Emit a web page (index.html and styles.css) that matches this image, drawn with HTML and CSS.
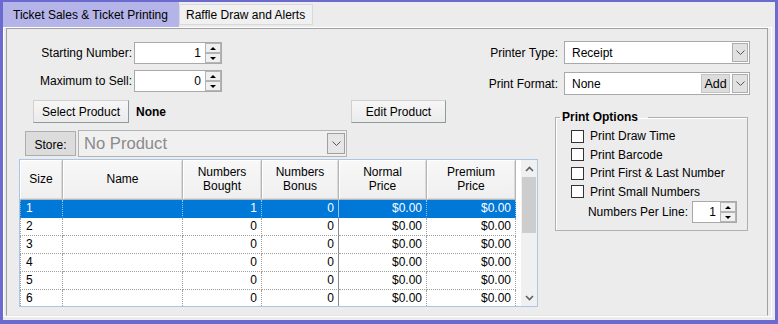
FILE: index.html
```html
<!DOCTYPE html>
<html lang="en">
<head>
  <meta charset="UTF-8" />
  <title>Ticket Sales</title>
  <link rel="stylesheet" href="styles.css">
</head>
<body>
  <div class="window">
    <div class="tabs">
      <div class="tab active">Ticket Sales &amp; Ticket Printing</div>
      <div class="tab">Raffle Draw and Alerts</div>
    </div>

    <div class="tabpanel">
      <div class="panel">

        <div class="top">
          <div class="form left-form">
            <div class="field">
              <label>Starting Number:</label>
              <div class="spin num-spin">
                <span class="val">1</span>
                <div class="spin-btns"><span class="up"></span><span class="down"></span></div>
              </div>
            </div>
            <div class="field">
              <label>Maximum to Sell:</label>
              <div class="spin num-spin">
                <span class="val">0</span>
                <div class="spin-btns"><span class="up"></span><span class="down"></span></div>
              </div>
            </div>
          </div>

          <div class="form right-form">
            <div class="field">
              <label>Printer Type:</label>
              <div class="combo">
                <span class="val">Receipt</span>
                <span class="drop"><svg width="9" height="5" viewBox="0 0 9 5"><path d="M0.5 0.5 L4.5 4.5 L8.5 0.5" fill="none" stroke="#555"/></svg></span>
              </div>
            </div>
            <div class="field">
              <label>Print Format:</label>
              <div class="combo">
                <span class="val">None</span>
                <span class="add">Add</span>
                <span class="drop"><svg width="9" height="5" viewBox="0 0 9 5"><path d="M0.5 0.5 L4.5 4.5 L8.5 0.5" fill="none" stroke="#555"/></svg></span>
              </div>
            </div>
          </div>
        </div>

        <div class="bottom">
          <div class="left">
            <div class="product-row">
              <button class="btn select-btn">Select Product</button>
              <span class="product-name">None</span>
              <button class="btn edit-btn">Edit Product</button>
            </div>

            <div class="store-row">
              <button class="store-btn">Store:</button>
              <div class="store-combo">
                <span class="val">No Product</span>
                <span class="drop"><svg width="9" height="5" viewBox="0 0 9 5"><path d="M0.5 0.5 L4.5 4.5 L8.5 0.5" fill="none" stroke="#555"/></svg></span>
              </div>
            </div>

            <div class="grid">
              <div class="grid-main">
                <div class="grid-head">
                  <div class="hcell">Size</div>
                  <div class="hcell">Name</div>
                  <div class="hcell">Numbers<br>Bought</div>
                  <div class="hcell">Numbers<br>Bonus</div>
                  <div class="hcell">Normal<br>Price</div>
                  <div class="hcell">Premium<br>Price</div>
                </div>
                <div class="grid-body">
                  <div class="grow selected">
                    <div class="cell">1</div><div class="cell"></div><div class="cell r">1</div><div class="cell r split">0</div><div class="cell r">$0.00</div><div class="cell r">$0.00</div>
                  </div>
                  <div class="grow">
                    <div class="cell">2</div><div class="cell"></div><div class="cell r">0</div><div class="cell r split">0</div><div class="cell r">$0.00</div><div class="cell r">$0.00</div>
                  </div>
                  <div class="grow">
                    <div class="cell">3</div><div class="cell"></div><div class="cell r">0</div><div class="cell r split">0</div><div class="cell r">$0.00</div><div class="cell r">$0.00</div>
                  </div>
                  <div class="grow">
                    <div class="cell">4</div><div class="cell"></div><div class="cell r">0</div><div class="cell r split">0</div><div class="cell r">$0.00</div><div class="cell r">$0.00</div>
                  </div>
                  <div class="grow">
                    <div class="cell">5</div><div class="cell"></div><div class="cell r">0</div><div class="cell r split">0</div><div class="cell r">$0.00</div><div class="cell r">$0.00</div>
                  </div>
                  <div class="grow">
                    <div class="cell">6</div><div class="cell"></div><div class="cell r">0</div><div class="cell r split">0</div><div class="cell r">$0.00</div><div class="cell r">$0.00</div>
                  </div>
                </div>
              </div>
              <div class="grid-gap"></div>
              <div class="scrollbar">
                <div class="sb-arrow"><svg width="9" height="6" viewBox="0 0 9 6"><path d="M1 5 L4.5 1.5 L8 5" fill="none" stroke="#606060" stroke-width="1.6"/></svg></div>
                <div class="sb-track"><div class="sb-thumb"></div></div>
                <div class="sb-arrow"><svg width="9" height="6" viewBox="0 0 9 6"><path d="M1 1 L4.5 4.5 L8 1" fill="none" stroke="#606060" stroke-width="1.6"/></svg></div>
              </div>
            </div>
          </div>

          <fieldset class="options">
            <legend>Print Options</legend>
            <div class="check"><span class="box"></span>Print Draw Time</div>
            <div class="check"><span class="box"></span>Print Barcode</div>
            <div class="check"><span class="box"></span>Print First &amp; Last Number</div>
            <div class="check"><span class="box"></span>Print Small Numbers</div>
            <div class="per-line">
              <label>Numbers Per Line:</label>
              <div class="spin small-spin">
                <span class="val">1</span>
                <div class="spin-btns"><span class="up"></span><span class="down"></span></div>
              </div>
            </div>
          </fieldset>
        </div>

      </div>
    </div>
  </div>
</body>
</html>
```

FILE: styles.css
```css
html, body {
  margin: 0;
  height: 324px;
  overflow: hidden;
}

body {
  background-color: #6b6bcf;
  font-family: 'Liberation Sans', Arial, sans-serif;
  font-size: 12px;
  color: #000;
}

.window {
  margin: 2px 3px 0 3px;
  height: 318px;
  background-color: #ececec;
  display: flex;
  flex-direction: column;
}

/* tab strip */
.tabs {
  display: flex;
  align-items: flex-start;
  height: 25px;
}

.tab {
  box-sizing: border-box;
  display: flex;
  align-items: center;
}

.tab.active {
  width: 176px;
  height: 25px;
  padding-left: 10px;
  background-color: #b4b4e8;
  position: relative;
  z-index: 1;
}

.tab:not(.active) {
  width: 134px;
  height: 21px;
  margin-top: 2px;
  padding: 1px 0 0 6px;
  background-color: #f0f0f0;
  border: 1px solid #d9d9d9;
}

.tabpanel {
  flex: 1;
  display: flex;
  border: 1px solid #fff;
  padding: 0 3px 0 2px;
  margin: 0 3px 3px 0;
}

.panel {
  flex: 1;
  border: 1px solid #a0a0a0;
  border-bottom-color: #e4e4e4;
  padding: 12px 17px 0 12px;
}

/* top forms */
.top {
  display: flex;
  justify-content: space-between;
}

.form {
  display: flex;
  flex-direction: column;
}

.left-form {
  margin-top: 1px;
  gap: 6px;
}

.right-form {
  gap: 8px;
}

.field {
  display: flex;
  align-items: center;
}

.left-form label {
  width: 113px;
  text-align: right;
  margin-right: 2px;
}

.right-form label {
  width: 77px;
  text-align: right;
  margin-right: 6px;
}

.spin {
  box-sizing: border-box;
  display: flex;
  height: 22px;
  border: 1px solid #a9a9a9;
  background-color: #fff;
}

.spin .val {
  flex: 1;
  text-align: right;
  padding-right: 3px;
  line-height: 20px;
}

.num-spin {
  width: 88px;
}

.small-spin {
  width: 45px;
}

.spin-btns {
  display: flex;
  flex-direction: column;
  width: 16px;
  margin: 0 0 0 1px;
}

.spin-btns span {
  flex: 1;
  box-sizing: border-box;
  border: 1px solid #b4b4b4;
  background-color: #f0f0f0;
  display: flex;
  align-items: center;
  justify-content: center;
}

.spin-btns .up::after,
.spin-btns .down::after {
  content: '';
  border-left: 3px solid transparent;
  border-right: 3px solid transparent;
}

.spin-btns .up::after {
  border-bottom: 3px solid #000;
}

.spin-btns .down::after {
  border-top: 3px solid #000;
}

.combo {
  box-sizing: border-box;
  width: 186px;
  height: 23px;
  padding: 1px;
  display: flex;
  align-items: center;
  border: 1px solid #a9a9a9;
  background-color: #fff;
}

.combo .val {
  flex: 1;
  padding-left: 6px;
}

.drop {
  box-sizing: border-box;
  width: 16px;
  height: 100%;
  display: flex;
  align-items: center;
  justify-content: center;
  background-color: #e1e1e1;
  border: 1px solid #adadad;
}

.combo .add {
  box-sizing: border-box;
  height: 19px;
  width: 29px;
  margin-right: 2px;
  font-size: 12.5px;
  display: flex;
  align-items: center;
  justify-content: center;
  background-color: #dcdcdc;
  border: 1px solid #c4c4c4;
}

/* lower area */
.bottom {
  display: flex;
  gap: 17px;
  margin-top: 5px;
}

.left {
  width: 519px;
}

.product-row {
  display: flex;
  align-items: center;
  height: 23px;
}

.btn {
  box-sizing: border-box;
  height: 23px;
  padding: 0;
  font-family: inherit;
  font-size: 12px;
  color: #000;
  background: linear-gradient(#f6f6f6, #ebebeb);
  border: 1px solid #d0d0d0;
  border-right-color: #8c9c9c;
  border-bottom-color: #8c9c9c;
}

.select-btn {
  width: 96px;
  margin-left: 14px;
}

.product-name {
  flex: 1;
  margin-left: 7px;
  font-weight: bold;
}

.edit-btn {
  width: 95px;
  margin-right: 92px;
}

.store-row {
  display: flex;
  margin-top: 7px;
  height: 27px;
}

.store-btn {
  box-sizing: border-box;
  width: 51px;
  height: 25px;
  margin: 1px 0 0 6px;
  padding: 2px 0 0;
  font-family: inherit;
  font-size: 12px;
  color: #000;
  background-color: #dcdcdc;
  border: 1px solid #adadad;
}

.store-combo {
  box-sizing: border-box;
  width: 269px;
  margin-left: 2px;
  padding: 2px 1px 2px 0;
  display: flex;
  align-items: center;
  border: 1px solid #b4b4b4;
  background-color: #f0f0f0;
}

.store-combo .val {
  flex: 1;
  padding-left: 5px;
  font-size: 16.6px;
  color: #8a8a8a;
}

.store-combo .drop {
  width: 18px;
  background-color: #e6e6e6;
  border-color: #a0a0a0;
}

/* data grid */
.grid {
  box-sizing: border-box;
  display: flex;
  margin-top: 2px;
  height: 148px;
  border: 1px solid #a9c6e6;
  background-color: #fff;
  overflow: hidden;
}

.grid-main {
  width: 496px;
}

.grid-head,
.grow {
  display: grid;
  grid-template-columns: 43px 120px 79px 77px 88px 89px;
}

.grid-head {
  height: 40px;
}

.hcell {
  box-sizing: border-box;
  display: flex;
  align-items: center;
  justify-content: center;
  text-align: center;
  line-height: 14px;
  padding-bottom: 1px;
  background: linear-gradient(#f8f8f8, #efefef);
  border-right: 1px solid #b5b5b5;
  border-bottom: 1px solid #b5b5b5;
  box-shadow: inset 1px 1px 0 #fff, inset -1px -1px 0 #dadada;
}

.grow {
  height: 18px;
}

.cell {
  box-sizing: border-box;
  padding: 0 4px 0 5px;
  line-height: 17px;
  border-right: 1px dotted #a0a0a0;
  border-bottom: 1px dotted #a0a0a0;
}

.cell:first-child {
  border-left: 1px dotted #a0a0a0;
}

.cell.r {
  text-align: right;
}

.cell.split {
  border-right: 1px solid #8c8c8c;
}

.grow.selected {
  background-color: #0078d7;
  color: #fff;
}

.grow.selected .cell {
  border-right-color: #9cc3e8;
  border-bottom-color: #0078d7;
}

.grid-gap {
  width: 5px;
}

.scrollbar {
  width: 16px;
  display: flex;
  flex-direction: column;
  background-color: #f0f0f0;
}

.sb-arrow {
  height: 17px;
  display: flex;
  align-items: center;
  justify-content: center;
}

.sb-track {
  flex: 1;
}

.sb-thumb {
  height: 56px;
  margin: 0 1px;
  background-color: #cdcdcd;
}

/* print options group */
.options {
  box-sizing: border-box;
  width: 193px;
  height: 121px;
  margin: 10px 0 0 0;
  padding: 3px 10px 0 15px;
  border: 1px solid #b0b0b0;
  box-shadow: inset 1px 1px 0 #fff;
}

.options legend {
  margin-left: -11px;
  padding: 0 10px 0 2px;
  line-height: 14px;
  font-weight: bold;
}

.check {
  display: flex;
  align-items: center;
  height: 18.5px;
}

.box {
  box-sizing: border-box;
  width: 13px;
  height: 13px;
  margin-right: 6px;
  border: 1px solid #333;
  background-color: #fff;
}

.per-line {
  display: flex;
  align-items: center;
  justify-content: flex-end;
}

.per-line label {
  margin-right: 4px;
}
```
